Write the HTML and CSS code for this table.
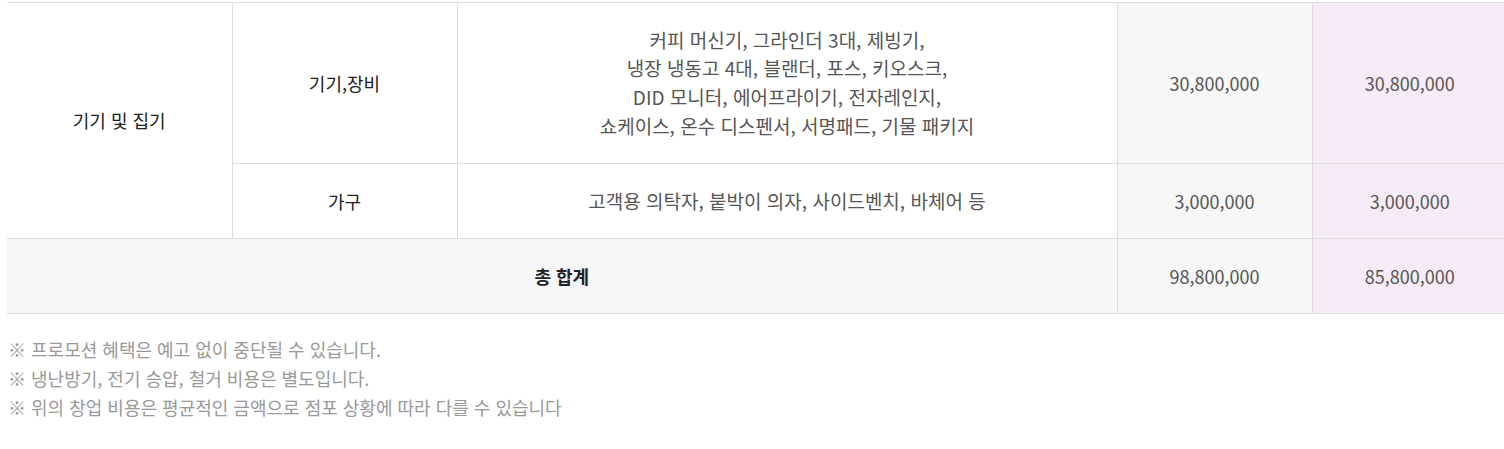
FILE: index.html
```html
<!DOCTYPE html>
<html lang="ko">
<head>
    <meta charset="UTF-8">
    <meta name="viewport" content="width=device-width, initial-scale=1.0">
    <title>창업 비용</title>
    <link rel="stylesheet" href="styles.css">
</head>
<body>
    <div class="cost-wrap">
        <table class="cost-table">
            <colgroup>
                <col class="c-group">
                <col class="c-item">
                <col class="c-desc">
                <col class="c-price">
                <col class="c-promo">
            </colgroup>
            <tbody>
                <tr class="row-equip">
                    <td rowspan="2" class="group">기기 및 집기</td>
                    <td class="item">기기,장비</td>
                    <td class="desc">커피 머신기, 그라인더 3대, 제빙기,<br>냉장 냉동고 4대, 블랜더, 포스, 키오스크,<br>DID 모니터, 에어프라이기, 전자레인지,<br>쇼케이스, 온수 디스펜서, 서명패드, 기물 패키지</td>
                    <td class="price">30,800,000</td>
                    <td class="promo">30,800,000</td>
                </tr>
                <tr class="row-furn">
                    <td class="item">가구</td>
                    <td class="desc">고객용 의탁자, 붙박이 의자, 사이드벤치, 바체어 등</td>
                    <td class="price">3,000,000</td>
                    <td class="promo">3,000,000</td>
                </tr>
                <tr class="row-total">
                    <td colspan="3" class="total-label">총 합계</td>
                    <td class="price">98,800,000</td>
                    <td class="promo">85,800,000</td>
                </tr>
            </tbody>
        </table>

        <ul class="notes">
            <li>※ 프로모션 혜택은 예고 없이 중단될 수 있습니다.</li>
            <li>※ 냉난방기, 전기 승압, 철거 비용은 별도입니다.</li>
            <li>※ 위의 창업 비용은 평균적인 금액으로 점포 상황에 따라 다를 수 있습니다</li>
        </ul>
    </div>
</body>
</html>
```

FILE: styles.css
```css
html, body {
    margin: 0;
    padding: 0;
    overflow: hidden;
}
body {
    font-family: "Noto Sans CJK KR", "Noto Sans", sans-serif;
    font-size: 18px;
    color: #222;
    background: #fff;
}
.cost-wrap {
    padding: 2px 0 0 7px;
}
.cost-table {
    width: 1500px;
    table-layout: fixed;
    border-collapse: collapse;
    border-top: 1px solid #dddddd;
}
.c-group { width: 225px; }
.c-item { width: 225px; }
.c-desc { width: 660px; }
.c-price { width: 195px; }
.c-promo { width: 195px; }

.cost-table td {
    text-align: center;
    vertical-align: middle;
    border-bottom: 1px solid #dddddd;
    border-left: 1px solid #dddddd;
    line-height: 28.7px;
    padding: 0;
}
.cost-table td.group,
.cost-table td.total-label {
    border-left: none;
}
.row-equip td { height: 160px; }
.row-furn td { height: 74px; }
.row-total td { height: 74px; }

.desc, .price, .promo {
    color: #555;
}
.cost-table td.desc {
    font-size: 19px;
}
.price {
    background: #f7f7f7;
}
.promo {
    background: #f6ebf7;
}
.total-label {
    background: #f7f6f9;
    font-weight: bold;
}

.notes {
    list-style: none;
    margin: 21px 0 0 1px;
    padding: 0;
    color: #999;
    line-height: 29px;
}
```
